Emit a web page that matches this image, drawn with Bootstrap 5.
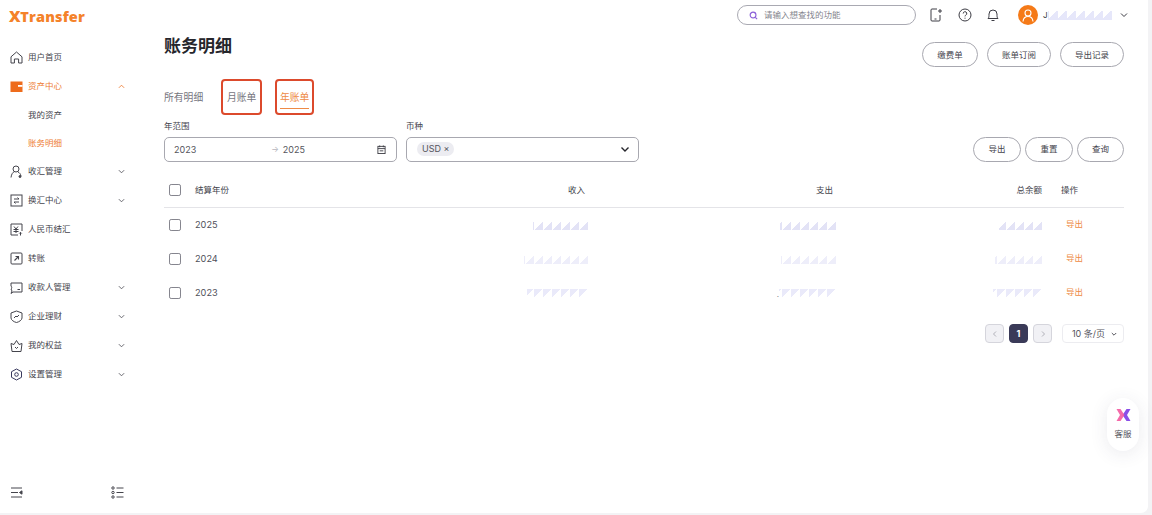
<!DOCTYPE html>
<html lang="zh-CN">
<head>
<meta charset="utf-8">
<title>账务明细</title>
<link href="https://cdn.jsdelivr.net/npm/bootstrap@5.3.0/dist/css/bootstrap.min.css" rel="stylesheet">
<style>
html,body{height:515px;overflow:hidden}
body{background:#f3f3f5;font-family:Inter,"Noto Sans CJK SC",sans-serif;color:#3c3c44;font-size:9px}
.shell{width:1148px;height:513px;background:#fff;border-bottom-right-radius:7px;position:relative}
.side{width:150px;flex:none}
.brand{height:43px;padding:7px 0 0 9px;font-family:"Open Sans",sans-serif;font-weight:800;font-size:14.5px;line-height:18px;color:#f4822a;letter-spacing:.15px}
.brand b{font-size:16px;font-weight:800;letter-spacing:-.3px}
.menu{list-style:none;margin:0;padding:0}
.menu li{height:29px;display:flex;align-items:center;padding-left:10px;font-size:8.5px;color:#44444c}
.menu li svg.ico{width:13px;height:13px;margin-right:5px;flex:none}
.menu li.sub{padding-left:28px}
.menu li.sub.tight{height:28px}
.menu li .arr{width:7px;height:7px;margin-left:auto;margin-right:25px}
.menu .on{color:#ee7d33}
.side-foot{padding:0 26px 14px 10px}
.main{padding:0 24px 0 14px;min-width:0}
.top{height:30px;padding-top:5px}
.search{width:179px;height:20px;border:1px solid #a9a9b2;border-radius:10px;padding-left:11px;font-size:8.5px;color:#85858e;margin-right:13px}
.search svg{width:9px;height:9px;margin-right:6px}
.tool{width:14px;height:14px}
.tools{height:20px;margin-right:-4px}
.gap15{margin-right:15px}.gap14{margin-right:14px}.gap18{margin-right:18px}
.avatar{width:20px;height:20px;background:#f57a18}
.uname{width:6px;margin-left:4px;padding-left:1px;font-size:8px}
.mask{background-size:9px 9px;background-repeat:repeat-x;background-position:right center}
.m-a{background-image:linear-gradient(135deg,transparent 50%,#e3e3f6 50%)}
.m-b{background-image:linear-gradient(135deg,transparent 50%,#eeeefa 50%)}
.m-c{background-image:linear-gradient(315deg,transparent 50%,#eaeafa 50%)}
.user-mask{width:64px;height:9px;background-image:linear-gradient(135deg,transparent 40%,#e6e7fa 40%)}
.cell-mask{display:inline-block;height:11px;vertical-align:middle}
.speck{color:#77777f;font-size:8px;vertical-align:middle}
.head-row{height:49px}
.title{font-size:17px;font-weight:700;color:#26262c;margin:0;line-height:20px;padding-top:6px}
.head-btns{gap:9px;margin-top:12px}
.pill{height:25px;border:1px solid #a8a8b0;border-radius:13px;background:#fff;color:#44444c;font-size:8.5px;padding:0;line-height:22px}
.pill:hover{background:#fff}
.w56{width:56px}.w64{width:64px}.w48{width:48px}.w47{width:47px}
.tabs{height:36px;font-size:9.8px;color:#75757d}
.tabs span{padding-top:2px}
.tab-a{margin-right:18px}
.mark-box{border:2px solid #dc4a2c;border-radius:4px;height:36px;display:flex;align-items:center;justify-content:center;position:relative}
.mark-a{width:41px}
.mark-b{width:39px;margin-left:13px;color:#ee8a45}
.mark-b::after{content:"";position:absolute;left:3px;right:3px;bottom:4px;height:1.5px;background:#ee8a45}
.filters{margin-top:5px}
.lbl{font-size:8.5px;color:#44444c;line-height:12px;margin-bottom:5px}
.field{width:233px;height:24.5px;border:1px solid #a8a8b0;border-radius:5px;background:#fff;font-size:9px;color:#55555d}
.date{padding:0 10px 0 9px}
.date .arrow{color:#b5b5bd;margin:0 4px 0 75px;font-size:8px}
.date svg{width:9px;height:9px;margin-left:auto}
.cur{padding:0 8px 0 10px}
.cur svg{width:10px;height:10px;margin-left:auto}
.tag{background:#ececf1;color:#55555d;font-size:9px;font-weight:400;border-radius:8px;padding:2px 5px;line-height:10px}
.acts{gap:4px}
.acts .pill{height:24.5px}
.grid{table-layout:fixed;width:960px;margin:14.5px 0 0;font-size:8.5px;color:#44444c}
.grid th,.grid td{padding:0;border:0;background:transparent;font-weight:400;vertical-align:middle;color:#44444c}
.grid thead tr{height:31px}
.grid thead th{border-bottom:1px solid #e4e4e8;padding-bottom:2px}
.grid tbody tr{height:34px}
.grid tbody td{padding-top:2px}
.grid td.yr{font-size:9.2px;color:#50505a}
.c1{width:31px}.c2{width:100px}.c3{width:293px}.c4{width:248px}.c5{width:206px}.c6{width:82px}
.grid th.end{text-align:right;padding-right:3px}
.grid th.flush{padding-right:0}
.grid td.end{text-align:right}
.grid th.op{padding-left:19px}
.grid tbody td.op{padding-left:24px;padding-top:0}
.grid a{color:#ee8a45;text-decoration:none}
.check{width:12px;height:12px;margin:0 0 0 5px;display:block;border:1px solid #85858e;border-radius:2px;float:none}
.pager{margin-top:15px;gap:5px}
.pg{width:19px;height:19px;border:1px solid #d5d5dc;border-radius:4px;background:#f1f1f5;color:#b0b0b8;font-size:9px;padding:0}
.pg.cur-page{background:#3a3a58;border-color:#3a3a58;color:#fff;font-weight:700}
.pg svg{width:6px;height:6px}
.size{width:62px;height:19px;border:1px solid #ececf0;border-radius:4px;margin-left:5px;font-size:9px;color:#55555d;padding-left:3px}
.size svg{width:6px;height:6px;margin-left:6px}
.help-float{position:absolute;left:1107px;top:398px;width:32px;height:53px;background:#fff;border-radius:16px;box-shadow:0 3px 18px rgba(60,60,90,.1);font-size:8.5px;color:#55555d;padding-top:10px}
.help-float svg{width:15px;height:14px;margin-bottom:6px}
</style>
</head>
<body>
<div class="shell d-flex">
  <aside class="side d-flex flex-column">
    <div class="brand"><b>X</b>Transfer</div>
    <ul class="menu flex-grow-1">
      <li><svg class="ico" viewBox="0 0 13 13" fill="none" stroke="#44444c" stroke-width="1"><path d="M1 5.8 6.5 1 12 5.8V12H8.6V8H4.4V12H1Z"/></svg>用户首页</li>
      <li class="on"><svg class="ico" viewBox="0 0 13 13"><rect x="0.500" y="1.500" width="12" height="10.500" fill="#ee6c1c"/><rect x="8" y="5" width="4.500" height="1.800" fill="#fff"/></svg>资产中心<svg class="arr" viewBox="0 0 8 8" fill="none" stroke="#ee7d33"><path d="M1 5.500 4 2.500l3 3"/></svg></li>
      <li class="sub tight">我的资产</li>
      <li class="sub tight on">账务明细</li>
      <li><svg class="ico" viewBox="0 0 13 13" fill="none" stroke="#44444c" stroke-width="1"><circle cx="6" cy="4" r="3"/><path d="M1 12.500c.4-3.500 2-5.500 3.500-5.800M8 7c1.500.6 2.500 2 3 4"/><circle cx="10" cy="11.500" r="1" fill="#44444c"/></svg>收汇管理<svg class="arr" viewBox="0 0 8 8" fill="none" stroke="#55555d"><path d="M1 2.500 4 5.500l3-3"/></svg></li>
      <li><svg class="ico" viewBox="0 0 13 13" fill="none" stroke="#44444c" stroke-width="1"><rect x="1" y="1" width="11" height="11"/><path d="M4 5h5L7.500 3.500M9 8H4l1.500 1.500"/></svg>换汇中心<svg class="arr" viewBox="0 0 8 8" fill="none" stroke="#55555d"><path d="M1 2.500 4 5.500l3-3"/></svg></li>
      <li><svg class="ico" viewBox="0 0 13 13" fill="none" stroke="#44444c" stroke-width="1"><path d="M8 12H1V1h11v7"/><path d="M4 3.500 6 6l2-2.500M3.500 6.500h5M3.500 8.500h5M6 6v4M10.500 12.500v-3M9.300 10.500l1.200-1.200 1.200 1.200"/></svg>人民币结汇</li>
      <li><svg class="ico" viewBox="0 0 13 13" fill="none" stroke="#44444c" stroke-width="1"><rect x="1" y="1" width="11" height="11" rx="1"/><path d="M4.500 8.500 8.500 4.500M5.500 4.500h3v3" stroke-width="1.100"/></svg>转账</li>
      <li><svg class="ico" viewBox="0 0 13 13" fill="none" stroke="#44444c" stroke-width="1"><path d="M1 2h11v9H3L1 12.500l1-2.500-1-2c1-.5 1-2 0-3z"/><path d="M7.500 8.500h2.500"/></svg>收款人管理<svg class="arr" viewBox="0 0 8 8" fill="none" stroke="#55555d"><path d="M1 2.500 4 5.500l3-3"/></svg></li>
      <li><svg class="ico" viewBox="0 0 13 13" fill="none" stroke="#44444c" stroke-width="1"><path d="M6.500 1 12 3v5c0 2-3 4-5.500 4.500C4 12 1 10 1 8V3z"/><path d="M4 8l2-2 1 1 2-2"/></svg>企业理财<svg class="arr" viewBox="0 0 8 8" fill="none" stroke="#55555d"><path d="M1 2.500 4 5.500l3-3"/></svg></li>
      <li><svg class="ico" viewBox="0 0 13 13" fill="none" stroke="#44444c" stroke-width="1"><path d="M1 4.500 4 5.500 6.500 1.500 9 5.500l3-1-1 8H2z"/><path d="M5 8l1.500 1.500L8 8"/></svg>我的权益<svg class="arr" viewBox="0 0 8 8" fill="none" stroke="#55555d"><path d="M1 2.500 4 5.500l3-3"/></svg></li>
      <li><svg class="ico" viewBox="0 0 13 13" fill="none" stroke="#3a3a5e" stroke-width="1"><path d="M6.500 1 11.500 3.700v5.600L6.500 12 1.500 9.300V3.700z"/><circle cx="6.500" cy="6.500" r="1.800"/></svg>设置管理<svg class="arr" viewBox="0 0 8 8" fill="none" stroke="#55555d"><path d="M1 2.500 4 5.500l3-3"/></svg></li>
    </ul>
    <div class="side-foot d-flex justify-content-between align-items-center">
      <svg width="13" height="13" viewBox="0 0 13 13" fill="none" stroke="#44444c"><path d="M1 2h11M1 6.500h7M1 11h11"/><path d="M12 4.800v3.400L9.500 6.500z" fill="#44444c"/></svg>
      <svg width="13" height="13" viewBox="0 0 13 13" fill="none" stroke="#44444c"><path d="M5.500 2H12.500M5.500 6.500H12.500M5.500 11H12.500"/><circle cx="2" cy="2" r="1.200"/><circle cx="2" cy="6.500" r="1.200"/><circle cx="2" cy="11" r="1.200"/></svg>
    </div>
  </aside>
  <main class="main flex-grow-1">
    <div class="top d-flex align-items-start justify-content-end">
      <div class="search d-flex align-items-center">
        <svg viewBox="0 0 10 10" fill="none" stroke="#8a5fd8" stroke-width="1.300"><circle cx="4.500" cy="4.500" r="3.200"/><path d="M7 7l2 2"/></svg>请输入想查找的功能
      </div>
      <div class="tools d-flex align-items-center">
        <svg class="tool gap15" viewBox="0 0 14 14" fill="none" stroke="#3c3c44"><path d="M8 1H3a1 1 0 0 0-1 1v10a1 1 0 0 0 1 1h7a1 1 0 0 0 1-1V7"/><path d="M5.500 11h2M11 1v4M9 3h4"/></svg>
        <svg class="tool gap14" viewBox="0 0 14 14" fill="none" stroke="#3c3c44"><circle cx="7" cy="7" r="6"/><path d="M5.200 5.500a1.800 1.800 0 1 1 2.600 1.600c-.5.300-.8.600-.8 1.300M7 9.700v1"/></svg>
        <svg class="tool gap18" viewBox="0 0 14 14" fill="none" stroke="#3c3c44"><path d="M2 10.500c1-1 1-2 1-4.500a4 4 0 0 1 8 0c0 2.500 0 3.500 1 4.500z"/><path d="M5.500 12.500h3"/></svg>
        <span class="avatar rounded-circle d-flex align-items-center justify-content-center"><svg width="12" height="13" viewBox="0 0 12 13" fill="none" stroke="#fff" stroke-width="1.100"><circle cx="6" cy="4" r="3"/><path d="M1 12.500c.3-3 2.300-5 5-5s4.700 2 5 5"/></svg></span>
        <span class="uname">J</span>
        <span class="mask user-mask"></span>
        <svg class="ms-2" width="8" height="8" viewBox="0 0 8 8" fill="none" stroke="#3c3c44"><path d="M1 2.500 4 5.500l3-3"/></svg>
      </div>
    </div>
    <div class="head-row d-flex justify-content-between align-items-start">
      <h1 class="title">账务明细</h1>
      <div class="head-btns d-flex">
        <button class="btn pill w56" type="button">缴费单</button>
        <button class="btn pill w64" type="button">账单订阅</button>
        <button class="btn pill w64" type="button">导出记录</button>
      </div>
    </div>
    <div class="tabs d-flex align-items-center">
      <span class="tab-a">所有明细</span>
      <span class="mark-box mark-a">月账单</span>
      <span class="mark-box mark-b">年账单</span>
    </div>
    <div class="filters d-flex align-items-end">
      <div class="me-2" style="padding-right:1px">
        <div class="lbl">年范围</div>
        <div class="field date d-flex align-items-center">2023<span class="arrow">→</span>2025
          <svg viewBox="0 0 10 10" fill="none" stroke="#3c3c44"><rect x="1" y="1.500" width="8" height="8"/><path d="M1 4h8M3 .5v2M7 .5v2M3 6.500h4"/></svg>
        </div>
      </div>
      <div>
        <div class="lbl">币种</div>
        <div class="field cur d-flex align-items-center"><span class="badge tag">USD ×</span>
          <svg viewBox="0 0 10 10" fill="none" stroke="#26262c" stroke-width="1.400"><path d="M1.500 3.500 5 7l3.500-3.500"/></svg>
        </div>
      </div>
      <div class="acts d-flex ms-auto">
        <button class="btn pill w48" type="button">导出</button>
        <button class="btn pill w48" type="button">重置</button>
        <button class="btn pill w47" type="button">查询</button>
      </div>
    </div>
    <table class="table grid">
      <colgroup><col class="c1"><col class="c2"><col class="c3"><col class="c4"><col class="c5"><col class="c6"></colgroup>
      <thead><tr>
        <th><input class="form-check-input check" type="checkbox" aria-label="全选"></th><th>结算年份</th><th class="end">收入</th><th class="end">支出</th><th class="end flush">总余额</th><th class="op">操作</th>
      </tr></thead>
      <tbody>
        <tr><td><input class="form-check-input check" type="checkbox" aria-label="2025"></td><td class="yr">2025</td><td class="end"><span class="mask cell-mask m-a" style="width:55px"></span></td><td class="end"><span class="mask cell-mask m-a" style="width:56px"></span></td><td class="end"><span class="mask cell-mask m-a" style="width:43px"></span></td><td class="op"><a href="#">导出</a></td></tr>
        <tr><td><input class="form-check-input check" type="checkbox" aria-label="2024"></td><td class="yr">2024</td><td class="end"><span class="mask cell-mask m-b" style="width:64px"></span></td><td class="end"><span class="mask cell-mask m-b" style="width:55px"></span></td><td class="end"><span class="mask cell-mask m-b" style="width:47px"></span></td><td class="op"><a href="#">导出</a></td></tr>
        <tr><td><input class="form-check-input check" type="checkbox" aria-label="2023"></td><td class="yr">2023</td><td class="end"><span class="mask cell-mask m-c" style="width:61px"></span></td><td class="end"><span class="speck">.</span><span class="mask cell-mask m-c" style="width:57px"></span></td><td class="end"><span class="mask cell-mask m-c" style="width:49px"></span></td><td class="op"><a href="#">导出</a></td></tr>
      </tbody>
    </table>
    <div class="pager d-flex justify-content-end align-items-center">
      <button class="btn pg d-flex align-items-center justify-content-center" type="button" aria-label="上一页"><svg viewBox="0 0 6 6" fill="none" stroke="#b0b0b8"><path d="M4 .5 1.500 3 4 5.500"/></svg></button>
      <button class="btn pg cur-page" type="button">1</button>
      <button class="btn pg d-flex align-items-center justify-content-center" type="button" aria-label="下一页"><svg viewBox="0 0 6 6" fill="none" stroke="#b0b0b8"><path d="M2 .5 4.500 3 2 5.500"/></svg></button>
      <div class="size d-flex align-items-center justify-content-center">10 条/页<svg viewBox="0 0 6 6" fill="none" stroke="#55555d"><path d="M.8 2 3 4.200 5.200 2"/></svg></div>
    </div>
  </main>
  <div class="help-float d-flex flex-column align-items-center">
    <svg viewBox="0 0 15 14"><path fill="#8a4fe8" d="M14.500 1h-4L6.500 7l4 6h4l-3.500-6z"/><path fill="#f45aa0" fill-opacity=".9" d="M.5 1h4l4 6-4 6h-4L4 7z"/></svg>
    客服
  </div>
</div>
<script src="https://cdn.jsdelivr.net/npm/bootstrap@5.3.0/dist/js/bootstrap.bundle.min.js"></script>
</body>
</html>
